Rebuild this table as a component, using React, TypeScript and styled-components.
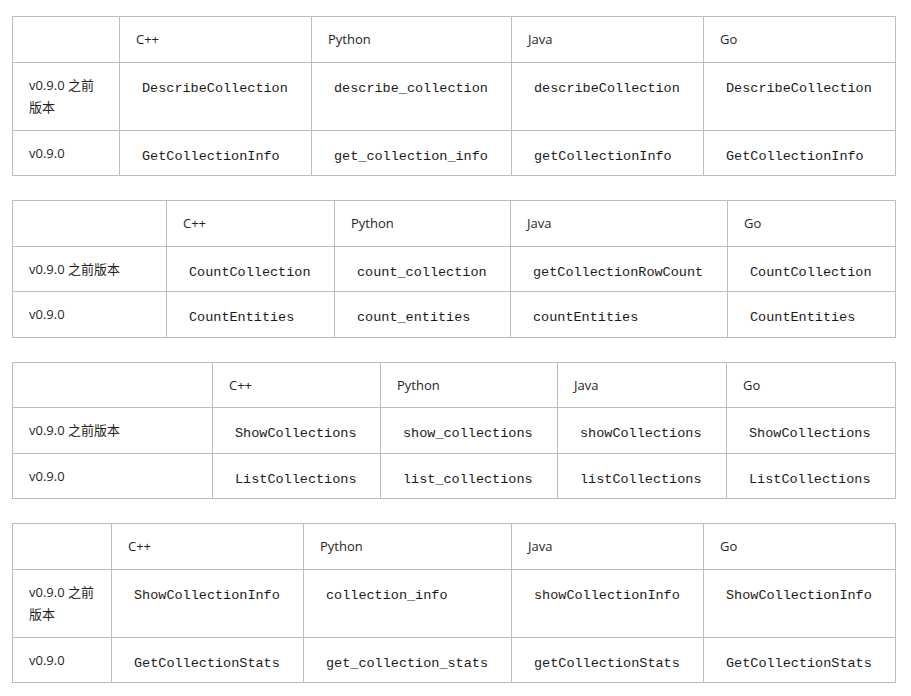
import styled, { createGlobalStyle } from "styled-components"

type Row = { version: string, names: string[] }

type ApiTable = {
  widths: number[]
  rows: Row[]
}

const languages = ['C++', 'Python', 'Java', 'Go']

const tables: ApiTable[] = [
  {
    widths: [107, 192, 200, 192, 192],
    rows: [
      { version: 'v0.9.0 之前版本', names: ['DescribeCollection', 'describe_collection', 'describeCollection', 'DescribeCollection'] },
      { version: 'v0.9.0', names: ['GetCollectionInfo', 'get_collection_info', 'getCollectionInfo', 'GetCollectionInfo'] },
    ],
  },
  {
    widths: [154, 168, 176, 217, 168],
    rows: [
      { version: 'v0.9.0 之前版本', names: ['CountCollection', 'count_collection', 'getCollectionRowCount', 'CountCollection'] },
      { version: 'v0.9.0', names: ['CountEntities', 'count_entities', 'countEntities', 'CountEntities'] },
    ],
  },
  {
    widths: [200, 168, 177, 169, 169],
    rows: [
      { version: 'v0.9.0 之前版本', names: ['ShowCollections', 'show_collections', 'showCollections', 'ShowCollections'] },
      { version: 'v0.9.0', names: ['ListCollections', 'list_collections', 'listCollections', 'ListCollections'] },
    ],
  },
  {
    widths: [99, 192, 208, 192, 192],
    rows: [
      { version: 'v0.9.0 之前版本', names: ['ShowCollectionInfo', 'collection_info', 'showCollectionInfo', 'ShowCollectionInfo'] },
      { version: 'v0.9.0', names: ['GetCollectionStats', 'get_collection_stats', 'getCollectionStats', 'GetCollectionStats'] },
    ],
  },
]

export default function App() {
  return (
    <>
      <GlobalStyle />
      <Page>
        {tables.map((table, index) => (
          <Table key={index}>
            <colgroup>
              {table.widths.map((width, i) => (
                <col key={i} style={{ width }} />
              ))}
            </colgroup>
            <thead>
              <tr>
                <Cell />
                {languages.map((language) => (
                  <Cell key={language}>{language}</Cell>
                ))}
              </tr>
            </thead>
            <tbody>
              {table.rows.map((row) => (
                <tr key={row.version}>
                  <Cell>{row.version}</Cell>
                  {row.names.map((name, i) => (
                    <Cell key={i}><Code>{name}</Code></Cell>
                  ))}
                </tr>
              ))}
            </tbody>
          </Table>
        ))}
      </Page>
    </>
  )
}

const GlobalStyle = createGlobalStyle`
  body {
    margin: 0;
    background: #fff;
    font-family: "Open Sans", "Noto Sans CJK SC", sans-serif;
    color: #1f1f1f;
  }
`

const Page = styled.div`
  display: flex;
  flex-direction: column;
  gap: 24px;
  padding: 16px 16px 0 12px;
`

const Table = styled.table`
  width: 884px;
  table-layout: fixed;
  border-collapse: collapse;
`

const Cell = styled.td`
  border: 1px solid #bcbcbc;
  padding: 11px 16px 11px 16px;
  height: 22.5px;
  font-size: 13px;
  line-height: 22.5px;
  vertical-align: top;
  text-align: left;
  font-weight: 400;
  box-sizing: content-box;
`

const Code = styled.code`
  font-family: "Liberation Mono", monospace;
  font-size: 13.5px;
  line-height: 1;
  vertical-align: -2px;
  padding: 0 6px;
  color: #1a1a1a;
`
